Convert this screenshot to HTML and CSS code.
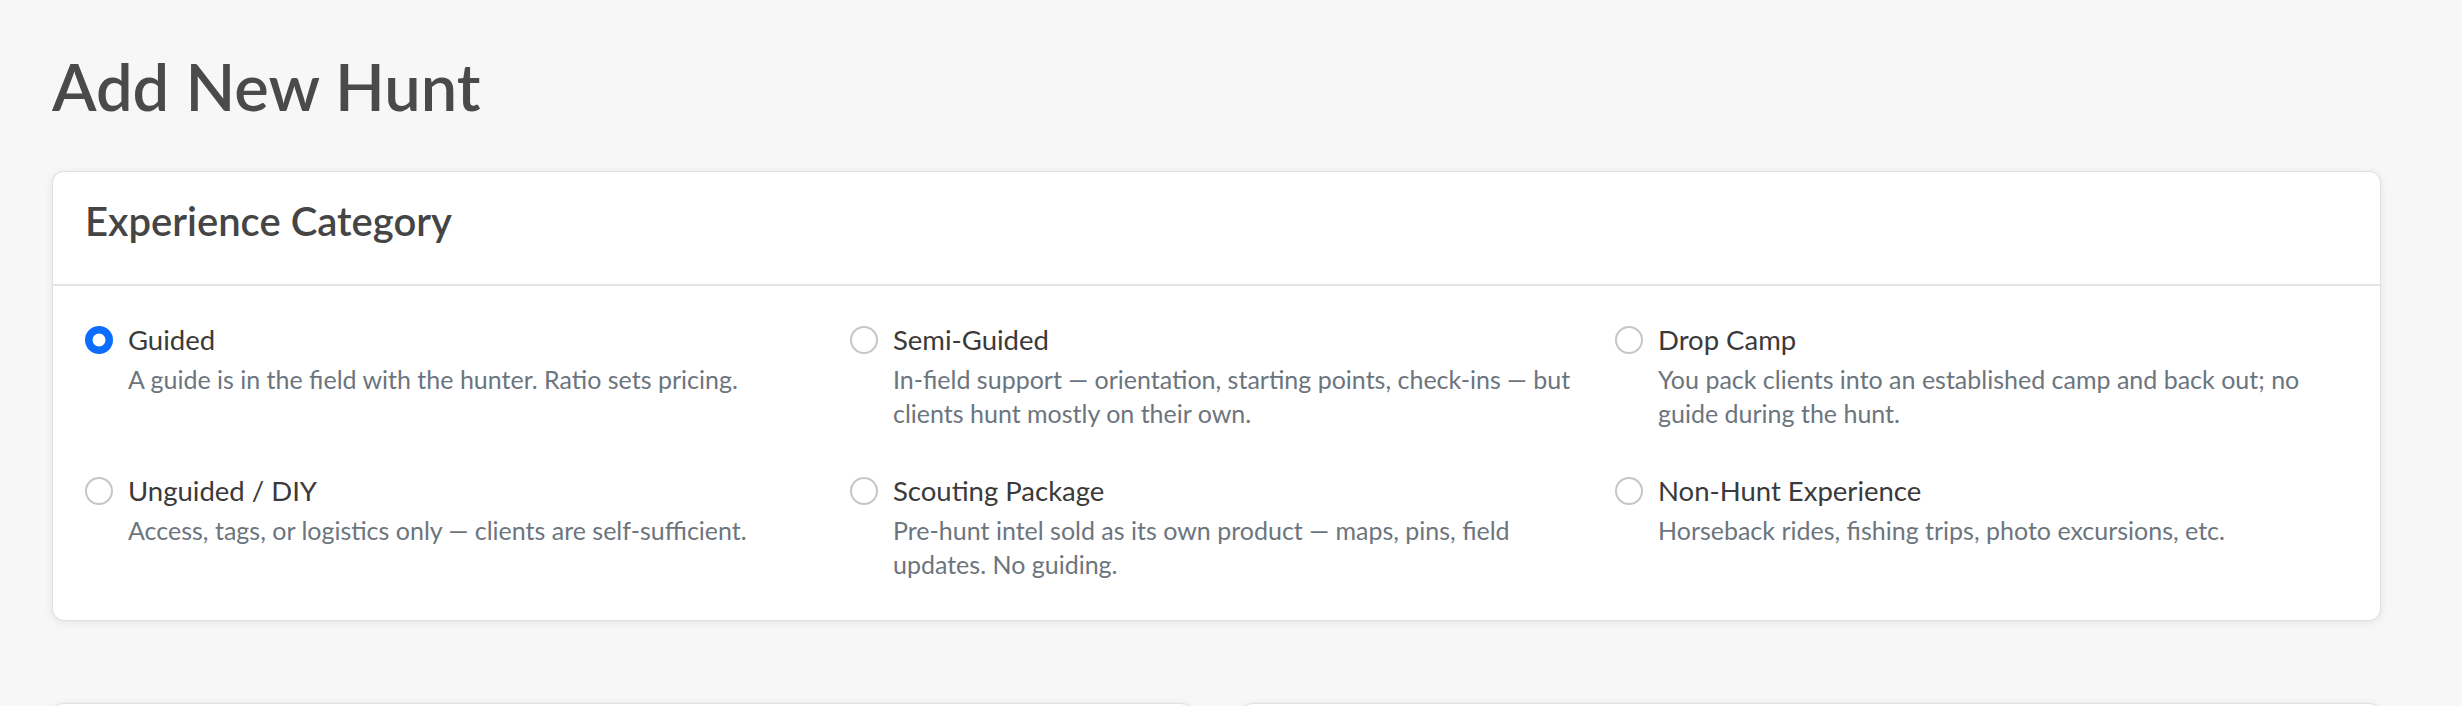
FILE: index.html
```html
<!DOCTYPE html>
<html lang="en">
<head>
<meta charset="utf-8">
<title>Add New Hunt</title>
<link rel="stylesheet" href="styles.css">
</head>
<body>
<main class="page">
  <h1 class="page-title">Add New Hunt</h1>

  <section class="card">
    <header class="card-header">
      <h2 class="card-title">Experience Category</h2>
    </header>
    <div class="card-body options">
      <label class="option">
        <input type="radio" name="category" class="radio" checked>
        <span class="option-text">
          <span class="option-label">Guided</span>
          <span class="option-desc">A guide is in the field with the hunter. Ratio sets pricing.</span>
        </span>
      </label>
      <label class="option">
        <input type="radio" name="category" class="radio">
        <span class="option-text">
          <span class="option-label">Semi-Guided</span>
          <span class="option-desc">In-field support — orientation, starting points, check-ins — but clients hunt mostly on their own.</span>
        </span>
      </label>
      <label class="option">
        <input type="radio" name="category" class="radio">
        <span class="option-text">
          <span class="option-label">Drop Camp</span>
          <span class="option-desc">You pack clients into an established camp and back out; no<br>guide during the hunt.</span>
        </span>
      </label>
      <label class="option">
        <input type="radio" name="category" class="radio">
        <span class="option-text">
          <span class="option-label">Unguided / DIY</span>
          <span class="option-desc">Access, tags, or logistics only — clients are self-sufficient.</span>
        </span>
      </label>
      <label class="option">
        <input type="radio" name="category" class="radio">
        <span class="option-text">
          <span class="option-label">Scouting Package</span>
          <span class="option-desc">Pre-hunt intel sold as its own product — maps, pins, field updates. No guiding.</span>
        </span>
      </label>
      <label class="option">
        <input type="radio" name="category" class="radio">
        <span class="option-text">
          <span class="option-label">Non-Hunt Experience</span>
          <span class="option-desc">Horseback rides, fishing trips, photo excursions, etc.</span>
        </span>
      </label>
    </div>
  </section>

  <div class="card-row">
    <section class="card card-placeholder"></section>
    <section class="card card-placeholder"></section>
  </div>
</main>
</body>
</html>
```
FILE: styles.css
```css
html, body {
  margin: 0;
  padding: 0;
  background: #f7f7f7;
}

body {
  font-family: "Lato", "Open Sans", "Liberation Sans", sans-serif;
  color: #3a3a3a;
}

.page {
  width: 2329px;
  padding: 47px 0 40px 52px;
}

.page-title {
  margin: 0;
  font-size: 65px;
  font-weight: 600;
  line-height: 1.2;
  color: #4a4a4a;
}

.card {
  margin-top: 46px;
  background: #ffffff;
  border: 1px solid #e1e1e1;
  border-radius: 12px;
  box-shadow: 0 2px 10px rgba(0, 0, 0, 0.07), 0 0 2px rgba(0, 0, 0, 0.05);
}

.card-header {
  padding: 24.5px 32px 39.5px;
  border-bottom: 2px solid #e4e4e4;
}

.card-title {
  margin: 0;
  font-size: 40px;
  font-weight: 600;
  line-height: 1.2;
  color: #454545;
}

.options {
  display: grid;
  grid-template-columns: repeat(3, 1fr);
  column-gap: 32px;
  row-gap: 39.5px;
  padding: 32px 32px 39px;
}

.option {
  display: flex;
  align-items: flex-start;
  gap: 15px;
  cursor: pointer;
}

.radio {
  appearance: none;
  -webkit-appearance: none;
  flex: 0 0 28px;
  width: 28px;
  height: 28px;
  margin: 7.75px 0 0;
  border: 2px solid #c6c6c6;
  border-radius: 50%;
  background: #ffffff;
  box-sizing: border-box;
}

.radio:checked {
  border-color: #0d6efd;
  background: radial-gradient(circle, #ffffff 0 6px, #0d6efd 6.8px);
}

.option-text {
  display: flex;
  flex-direction: column;
  min-width: 0;
}

.option-label {
  font-size: 27.5px;
  line-height: 43.5px;
  color: #3a3a3a;
}

.option-desc {
  font-size: 25px;
  line-height: 34px;
  color: #6c757d;
}

.card-row {
  display: grid;
  grid-template-columns: 1fr 1fr;
  column-gap: 48px;
  margin-top: 82px;
}

.card-row .card {
  margin-top: 0;
}

.card-placeholder {
  height: 240px;
}
```
